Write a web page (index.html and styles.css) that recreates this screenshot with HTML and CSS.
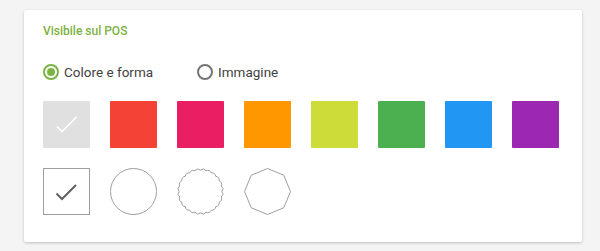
FILE: index.html
```html
<!DOCTYPE html>
<html lang="it">
<head>
    <meta charset="UTF-8">
    <meta name="viewport" content="width=device-width, initial-scale=1.0">
    <title>Visibile sul POS</title>
    <link rel="stylesheet" href="styles.css">
</head>
<body>
    <div class="card">
        <h2 class="card-title">Visibile sul POS</h2>

        <div class="radio-row">
            <label class="radio">
                <span class="radio-dot checked"></span>
                Colore e forma
            </label>
            <label class="radio">
                <span class="radio-dot"></span>
                Immagine
            </label>
        </div>

        <div class="swatches">
            <div class="swatch grey">
                <svg width="47" height="47" viewBox="0 0 47 47"><path d="M14 25.5 L19 30.5 L33.5 16" fill="none" stroke="#fff" stroke-width="1.6"/></svg>
            </div>
            <div class="swatch red"></div>
            <div class="swatch pink"></div>
            <div class="swatch orange"></div>
            <div class="swatch lime"></div>
            <div class="swatch green"></div>
            <div class="swatch blue"></div>
            <div class="swatch purple"></div>
        </div>

        <div class="shapes">
            <div class="shape">
                <svg width="47" height="47" viewBox="0 0 47 47">
                    <rect x="0.5" y="0.5" width="46" height="46" fill="none" stroke="#9e9e9e"/>
                    <path d="M13.5 25.5 L19 31 L33 17" fill="none" stroke="#616161" stroke-width="2"/>
                </svg>
            </div>
            <div class="shape">
                <svg width="47" height="47" viewBox="0 0 47 47">
                    <circle cx="23.5" cy="23.5" r="23" fill="none" stroke="#9e9e9e"/>
                </svg>
            </div>
            <div class="shape">
                <svg width="47" height="47" viewBox="0 0 47 47">
                    <path fill="none" stroke="#9e9e9e" d="M45 23.5
                        A4 4 0 0 1 44.27 29.06 A4 4 0 0 1 42.12 34.25 A4 4 0 0 1 38.7 38.7
                        A4 4 0 0 1 34.25 42.12 A4 4 0 0 1 29.06 44.27 A4 4 0 0 1 23.5 45
                        A4 4 0 0 1 17.94 44.27 A4 4 0 0 1 12.75 42.12 A4 4 0 0 1 8.3 38.7
                        A4 4 0 0 1 4.88 34.25 A4 4 0 0 1 2.73 29.06 A4 4 0 0 1 2 23.5
                        A4 4 0 0 1 2.73 17.94 A4 4 0 0 1 4.88 12.75 A4 4 0 0 1 8.3 8.3
                        A4 4 0 0 1 12.75 4.88 A4 4 0 0 1 17.94 2.73 A4 4 0 0 1 23.5 2
                        A4 4 0 0 1 29.06 2.73 A4 4 0 0 1 34.25 4.88 A4 4 0 0 1 38.7 8.3
                        A4 4 0 0 1 42.12 12.75 A4 4 0 0 1 44.27 17.94 A4 4 0 0 1 45 23.5 Z"/>
                </svg>
            </div>
            <div class="shape">
                <svg width="47" height="47" viewBox="0 0 47 47">
                    <polygon points="23.5,0.5 39.76,7.24 46.5,23.5 39.76,39.76 23.5,46.5 7.24,39.76 0.5,23.5 7.24,7.24" fill="none" stroke="#9e9e9e"/>
                </svg>
            </div>
        </div>
    </div>
</body>
</html>
```

FILE: styles.css
```css
body { margin: 0; padding: 10px 18px 9px 24px; background: #f4f4f4; font-family: Roboto, "Liberation Sans", sans-serif; }
.card { width: 558px; height: 232px; box-sizing: border-box; padding: 13px 20px 0 19px; background: #fff; border-radius: 2px; box-shadow: 0 1px 3px rgba(0, 0, 0, 0.22); }
.card-title { margin: 0; font-size: 12px; line-height: 16px; font-weight: 500; color: #7cb342; }

.radio-row { display: flex; gap: 44px; margin-top: 23px; height: 20px; align-items: center; }
.radio { display: flex; align-items: center; gap: 5px; font-size: 13.5px; color: #424242; }
.radio-dot { width: 16px; height: 16px; box-sizing: border-box; border: 2px solid #757575; border-radius: 50%; position: relative; }
.radio-dot.checked { border-color: #7cb342; }
.radio-dot.checked::after { content: ""; position: absolute; left: 2px; top: 2px; width: 8px; height: 8px; border-radius: 50%; background: #7cb342; }

.swatches, .shapes { display: flex; gap: 20px; }
.swatches { margin-top: 19px; }
.shapes { margin-top: 20px; }
.swatch { width: 47px; height: 47px; border-radius: 1px; }
.swatch svg, .shape svg { display: block; }
.grey { background: #e0e0e0; }
.red { background: #f44336; }
.pink { background: #e91e63; }
.orange { background: #ff9800; }
.lime { background: #cddc39; }
.green { background: #4caf50; }
.blue { background: #2196f3; }
.purple { background: #9c27b0; }
.shape { width: 47px; height: 47px; }
```
